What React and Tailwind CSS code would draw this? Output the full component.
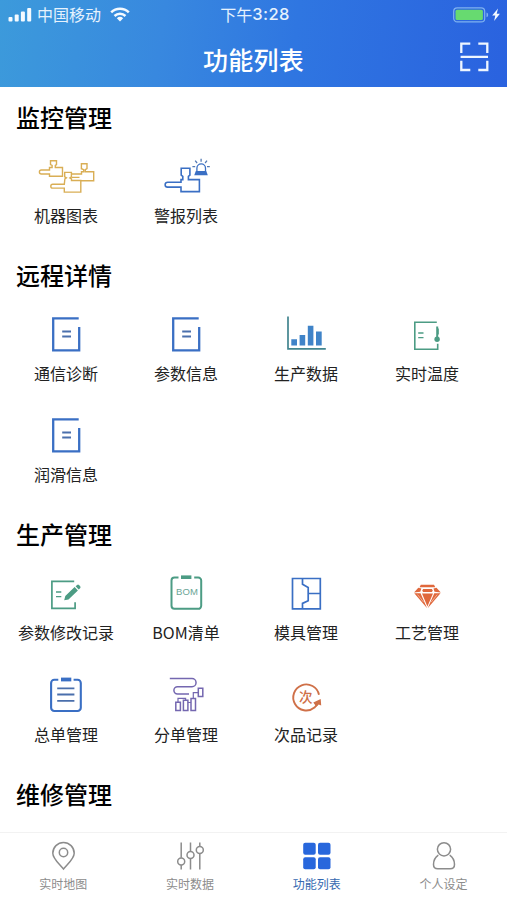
import React from "react";

const BLUE = "#3a6fc4";
const GREEN = "#4c9c84";
const GOLD = "#d9ae55";

function Glyph({ children, color, width = 1.5 }) {
  return (
    <svg
      className="h-12 w-[60px] shrink-0"
      viewBox="0 0 60 48"
      fill="none"
      stroke={color}
      strokeWidth={width}
    >
      {children}
    </svg>
  );
}

function MachinesIcon() {
  return (
    <Glyph color={GOLD} width={1.4}>
      <path d="M13.5 18H5.4a2 2 0 0 0 0 4h8.1v2.2h13v-8.7h-7.2v-2.1l1.2-.8V8.7h-6v3.9l1.6.8v2.1h-2.6z" />
      <path d="M35.500 22h10v-2.300h2.200v-2l-2.300-1v-5h5.600v5l-1.700 1v2h8.400v9H45M35.500 25.400h8" />
      <path d="M28.300 32.300H16.700a1.900 1.900 0 0 0 0 3.800h11.600v4h16.500V28.500h-9.300v-1.700l-1.600-.9 1.500-1v-4.500h-6.700v4.500l1.700 1-1.500 1-.2 1.600z" />
    </Glyph>
  );
}

function AlarmIcon() {
  return (
    <Glyph color={BLUE} width={1.6}>
      <path d="M25 30.200H11.600a2.400 2.400 0 0 0 0 4.900H25v4.500h18.400V27.600H32.400v-3.200l1.500-1.300v-6.900h-8.700v6.900l1.600 1.300v3.200H25z" />
      <path d="M40.900 18.900v-2.700a4.300 4.300 0 0 1 8.600 0v2.700" strokeWidth="1.300" />
      <path d="M39.800 19.100h10.500l1.500 4.200H38.200z" fill={BLUE} stroke="none" />
      <path
        d="M45.100 6.800v3M39.200 8.700l1.900 2.300M51 8.700l-1.900 2.300M36.400 14.600h2.800M51 14.600h2.800"
        stroke="#5379b4"
        strokeWidth="1.300"
      />
    </Glyph>
  );
}

function DocIcon() {
  return (
    <Glyph color={BLUE} width={2.300}>
      <path d="M42.700 8.400H17.200v32h26V17" />
      <path d="M26.200 21.400H35M26.200 26.400H35" stroke="#4a6fac" strokeWidth="2" />
    </Glyph>
  );
}

function BarsIcon() {
  return (
    <Glyph color="#42858f" width={1.700}>
      <path d="M12 6.500v32.300h37.800" />
      <path
        d="M15.300 29.300H21v6.200h-5.700zM23.600 25h5.600v10.500h-5.600zM31.800 15.800h5.600v19.700h-5.600zM40 21.500h5.700v14H40z"
        fill="#3f83c8"
        stroke="none"
      />
    </Glyph>
  );
}

function ThermoIcon() {
  return (
    <Glyph color={GREEN} width={1.600}>
      <path d="M39.800 12.300H17.800v27h22.900v-5.600" />
      <path d="M21.200 23h5.300M21.200 27.700h5.300" strokeWidth="1.300" />
      <path d="M40.200 16.500V28" strokeWidth="2" />
      <path d="M41.300 18.500v6" strokeWidth="1" />
      <circle cx="40.100" cy="29.300" r="2.700" fill={GREEN} stroke="none" />
    </Glyph>
  );
}

function EditIcon() {
  return (
    <Glyph color={GREEN} width={1.700}>
      <path d="M38.200 12.400H15.900v27h23.200v-6.200" />
      <path d="M20 23h5.300M20 27.700h5.300" strokeWidth="1.300" />
      <path
        d="M28.200 31.300l1.100-4.400 9.300-8.800 3.300 3.500-9.400 8.900zM39.600 17.300l1.500-1.400q1-.8 1.900.1l1.200 1.300q.8 1-.1 1.900l-1.400 1.400z"
        fill={GREEN}
        stroke="none"
      />
    </Glyph>
  );
}

function BomIcon() {
  return (
    <Glyph color={GREEN} width={2}>
      <path d="M22.500 8.500h-4a3 3 0 0 0-3 3v25.300a3 3 0 0 0 3 3h23.700a3 3 0 0 0 3-3V11.500a3 3 0 0 0-3-3h-4" />
      <path d="M25 8.200h10.400" strokeWidth="3.600" />
      <text
        x="31"
        y="26.300"
        textAnchor="middle"
        textLength="22"
        fontSize="9.500"
        fill="#6aa596"
        stroke="none"
        className="font-['Liberation_Sans',sans-serif]"
      >
        BOM
      </text>
    </Glyph>
  );
}

function MoldIcon() {
  return (
    <Glyph color={BLUE} width={1.700}>
      <path d="M16.500 9.500h27.800v30.300H16.500z" />
      <path d="M26.500 9.500v5.700l5.700 3.300v13.200l-5.700 2.700V40M32.200 24.500h12.300" />
    </Glyph>
  );
}

function DiamondIcon() {
  return (
    <Glyph color="#e0683c" width={1}>
      <g fill="#e0683c" stroke="none">
        <path d="M23.800 15.700h13.200l1.300 2.500h-15.800zM25.200 21.800l.9-1.900h8.800l.9 1.900-1 1.200h-8.600zM21.300 18.700l3 .8-1 3.200-6.300.7zM39.500 18.700l-3 .8 1 3.200 6.300.7zM25 24.600h11l-5.600 13z" />
        <path d="M17.300 24.200h6.200l6.600 15.100zM43.500 24.200h-6.200l-6.600 15.100z" />
      </g>
      <path d="M20.600 25.600l6 7.500M40.200 25.600l-6 7.500" stroke="#f7c9b4" strokeWidth=".7" />
    </Glyph>
  );
}

function ClipboardIcon() {
  return (
    <Glyph color={BLUE} width={2.100}>
      <path d="M22.300 8.800h-4a3.200 3.200 0 0 0-3.200 3.200v24.800a3.200 3.200 0 0 0 3.200 3.200h23.300a3.200 3.200 0 0 0 3.200-3.200V12a3.200 3.200 0 0 0-3.200-3.200h-4" />
      <path d="M25 8.500h10.300" strokeWidth="3.800" />
      <path d="M21.200 17.400h17.200M21.200 23.500h17.200M21.200 29.900h17.200" stroke="#4a6fac" strokeWidth="1.900" />
    </Glyph>
  );
}

function SplitIcon() {
  return (
    <Glyph color="#7467b0" width={1.500}>
      <path d="M13.800 7.600H36a4 4 0 0 1 0 8.100H21.500a3.500 3.500 0 0 0 0 7.200H33" />
      <path d="M19.800 31.200h4.600v8.400h-4.600zM27.400 29.200h4.500v10.400h-4.500zM35 27.400h4.500v12.200H35zM42.300 17.200h4.500v8.300h-4.500z" />
      <path d="M22 31v-3.700h7.600v2M31.900 31.500H35M37.300 27.400v-5.700h5" strokeWidth="1.200" />
    </Glyph>
  );
}

function DefectIcon() {
  return (
    <Glyph color="#cf7048" width={1.900}>
      <path d="M43 23.800a13 13 0 1 0-4.500 12.700l2.600-3" />
      <path d="M37.300 31.500l7.400-3.400.5 6.400-2.500-1-2.300 2.200z" fill="#cf7048" stroke="none" />
      <text
        x="29.700"
        y="30.600"
        textAnchor="middle"
        fontSize="13.500"
        fontWeight="500"
        fill="#cf7048"
        stroke="none"
      >
        次
      </text>
    </Glyph>
  );
}

const sections = [
  {
    title: "监控管理",
    items: [
      ["机器图表", MachinesIcon],
      ["警报列表", AlarmIcon],
    ],
  },
  {
    title: "远程详情",
    items: [
      ["通信诊断", DocIcon],
      ["参数信息", DocIcon],
      ["生产数据", BarsIcon],
      ["实时温度", ThermoIcon],
      ["润滑信息", DocIcon],
    ],
  },
  {
    title: "生产管理",
    items: [
      ["参数修改记录", EditIcon],
      ["BOM清单", BomIcon],
      ["模具管理", MoldIcon],
      ["工艺管理", DiamondIcon],
      ["总单管理", ClipboardIcon],
      ["分单管理", SplitIcon],
      ["次品记录", DefectIcon],
    ],
    gap: "gap-y-px",
  },
  { title: "维修管理", items: [] },
];

function StatusBar() {
  return (
    <div className="grid h-[29px] grid-cols-3 items-center pl-2 pr-[5px] text-[16px] leading-[29px] text-[#e6f2fd]">
      <div className="flex items-center">
        <svg className="mr-[5px] h-[15px] w-6" viewBox="0 0 24 15" fill="#f4faff">
          <rect x="0.500" y="10" width="4" height="4.500" rx="1" />
          <rect x="6.700" y="7.500" width="4" height="7" rx="1" />
          <rect x="12.900" y="4.500" width="4" height="10" rx="1" />
          <rect x="19.200" y="1" width="4" height="13.500" rx="1" />
        </svg>
        <span>中国移动</span>
        <svg className="ml-[9px] h-[15px] w-5" viewBox="0 0 20 15" fill="none" stroke="#f4faff" strokeWidth="2.500">
          <path d="M1.200 5.300a12.500 12.500 0 0 1 17.600 0M4.500 9a7.900 7.900 0 0 1 11 0" />
          <path d="M10 14.500l-3.200-3.300a4.700 4.700 0 0 1 6.400 0z" fill="#f4faff" stroke="none" />
        </svg>
      </div>
      <div className="flex items-center justify-center">
        <span>下午</span>
        <span className="font-['Inter',sans-serif] text-[16.5px] font-medium tracking-[0.4px]">3:28</span>
      </div>
      <div className="flex items-center justify-end">
        <svg className="h-4 w-[50px]" viewBox="0 0 50 16">
          <rect x="1.700" y="0.900" width="31" height="14" rx="3.500" fill="none" stroke="#7fb2ef" strokeWidth="1.200" />
          <rect x="3.500" y="2.700" width="27.400" height="10.400" rx="1.500" fill="#67da70" />
          <path d="M34.500 5.500q1.700.5 1.700 2.400t-1.700 2.400z" fill="#7fb2ef" />
          <path d="M46 1.500l-5.800 7h3.100l-1.200 5.500 5.800-7.200h-3.200z" fill="#f4faff" />
        </svg>
      </div>
    </div>
  );
}

function Header() {
  return (
    <header className="h-[87px] shrink-0 bg-[linear-gradient(97deg,#3c9adb_0%,#3888df_32%,#2f76e1_58%,#2a62df_100%)]">
      <StatusBar />
      <div className="grid h-[56px] grid-cols-[1fr_auto_1fr] items-center pr-[17px]">
        <span />
        <h1 className="pb-[1px] pl-[17px] pt-[6px] text-[25px] font-medium leading-[49px] tracking-[0.2px] text-white">
          功能列表
        </h1>
        <svg className="h-[30px] w-8 justify-self-end" viewBox="0 0 32 30" fill="none" stroke="#eef6ff" strokeWidth="2.300">
          <path d="M3.300 11V1.600h9M20.300 1.600h9V11M3.300 18.800v9.200h9M20.300 28h9v-9.200M2.600 14.800h27.400" />
        </svg>
      </div>
    </header>
  );
}

function Section({ title, items, gap = "" }) {
  return (
    <section className="pb-[21px]">
      <h2 className="h-9 pl-4 text-[24px] font-medium leading-[34px] text-black">{title}</h2>
      <div className={`grid grid-cols-[120px_120px_120px_122px] pl-1.5 ${gap}`}>
        {items.map(([label, Icon]) => (
          <div key={label} className="flex h-[101px] flex-col items-center pt-4">
            <Icon />
            <span className="mt-[5px] whitespace-nowrap text-[16px] leading-5 text-[#222]">{label}</span>
          </div>
        ))}
      </div>
    </section>
  );
}

const tabs = [
  [
    "实时地图",
    <g key="i">
      <path d="M15.500 28C9.500 21 4.800 17.300 4.800 12.200a10.700 10.700 0 0 1 21.400 0C26.200 17.300 21.500 21 15.500 28z" />
      <circle cx="15.500" cy="11.500" r="4.200" />
    </g>,
  ],
  [
    "实时数据",
    <g key="i">
      <path d="M6.200 1.500v15.300M6.200 24v4.500M15.500 1.500v8.800M15.500 17.500v11M24.800 1.500v3.800M24.800 12.500v16" />
      <circle cx="6.200" cy="20.400" r="3.500" />
      <circle cx="15.500" cy="14" r="3.500" />
      <circle cx="24.800" cy="8.900" r="3.500" />
    </g>,
  ],
  [
    "功能列表",
    <g key="i" fill="#2867dc" stroke="none">
      <rect x="1.200" y="1.700" width="12.500" height="12" rx="2" />
      <rect x="16" y="1.700" width="12.500" height="12" rx="2" />
      <rect x="1.200" y="16.200" width="12.500" height="12" rx="2" />
      <rect x="16" y="16.200" width="12.500" height="12" rx="2" />
    </g>,
  ],
  [
    "个人设定",
    <g key="i">
      <circle cx="15" cy="8.300" r="6.600" />
      <path d="M9.300 14.200C6 16.500 4.500 19.500 4.500 23.500q0 4.300 4.300 4.300h12.400q4.300 0 4.300-4.300c0-4-1.500-7-4.800-9.300" />
    </g>,
  ],
];

function TabBar() {
  return (
    <nav className="grid h-[68px] shrink-0 grid-cols-4 border-t border-[#f2f2f2] bg-white">
      {tabs.map(([label, icon]) => (
        <div key={label} className="flex flex-col items-center pt-2">
          <svg className="h-[30px] w-[30px]" viewBox="0 0 30 30" fill="none" stroke="#8c8c8c" strokeWidth="1.500">
            {icon}
          </svg>
          <span
            className={`mt-[5px] text-[12px] leading-4 ${label === "功能列表" ? "text-[#3468b0]" : "text-[#8c8c8c]"}`}
          >
            {label}
          </span>
        </div>
      ))}
    </nav>
  );
}

export default function App() {
  return (
    <div className="flex h-[900px] w-[507px] flex-col overflow-hidden bg-white font-['Noto_Sans_CJK_SC',sans-serif]">
      <Header />
      <main className="min-h-0 flex-1 overflow-hidden pt-[13px]">
        {sections.map((section) => (
          <Section key={section.title} {...section} />
        ))}
      </main>
      <TabBar />
    </div>
  );
}
